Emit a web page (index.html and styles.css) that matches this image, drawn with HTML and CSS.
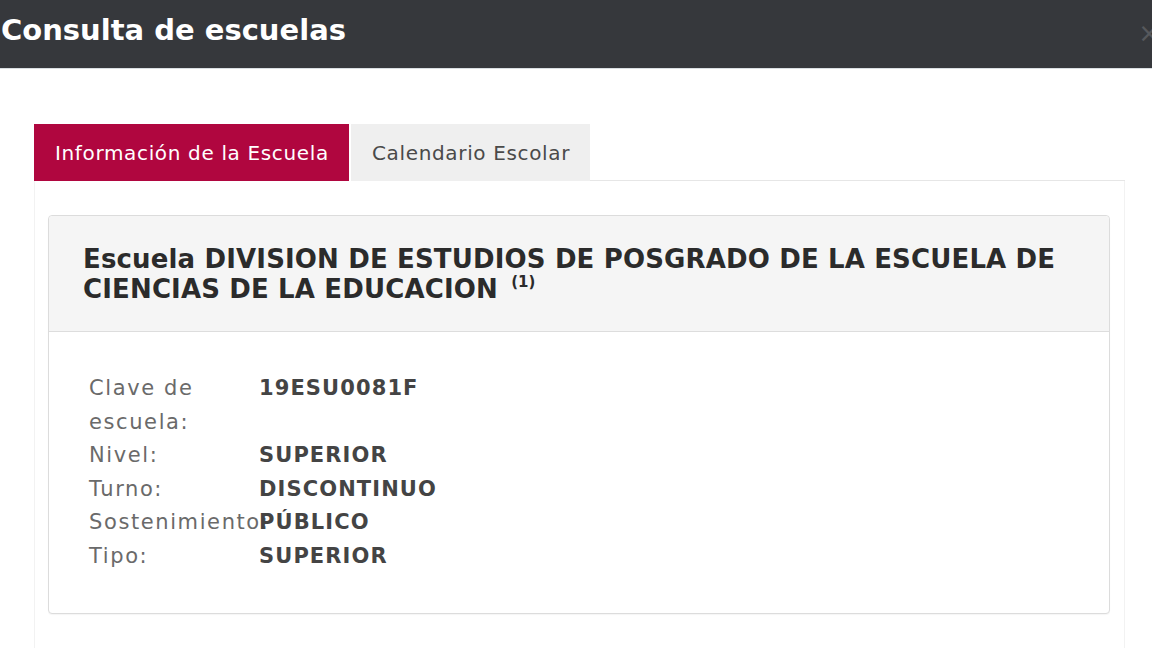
FILE: index.html
```html
<!DOCTYPE html>
<html lang="es">
<head>
<meta charset="utf-8">
<title>Consulta de escuelas</title>
<link rel="stylesheet" href="styles.css">
</head>
<body>
<header class="modal-header">
  <h1 class="modal-title">Consulta de escuelas</h1>
  <span class="close">×</span>
</header>
<main class="modal-body">
  <nav class="tabs">
    <div class="tab active">Información de la Escuela</div>
    <div class="tab">Calendario Escolar</div>
    <div class="tab-fill"></div>
  </nav>
  <section class="tab-content">
    <div class="panel">
      <div class="panel-heading">
        <h2 class="panel-title">Escuela DIVISION DE ESTUDIOS DE POSGRADO DE LA ESCUELA DE CIENCIAS DE LA EDUCACION <sup>(1)</sup></h2>
      </div>
      <div class="panel-body">
        <dl class="info">
          <dt>Clave de escuela:</dt><dd>19ESU0081F</dd>
          <dt>Nivel:</dt><dd>SUPERIOR</dd>
          <dt>Turno:</dt><dd>DISCONTINUO</dd>
          <dt class="nowrap">Sostenimiento:</dt><dd class="over">PÚBLICO</dd>
          <dt>Tipo:</dt><dd>SUPERIOR</dd>
        </dl>
      </div>
    </div>
  </section>
</main>
</body>
</html>
```

FILE: styles.css
```css
* { box-sizing: border-box; }
html, body { margin: 0; padding: 0; background: #fff; }
body {
  font-family: "DejaVu Sans", "Open Sans", sans-serif;
  color: #333;
  overflow: hidden;
  height: 648px;
}
.modal-header {
  height: 69px;
  background: #36383c;
  border-bottom: 1px solid #d9dee2;
  display: flex;
  align-items: center;
  justify-content: space-between;
  padding: 0 0 9px 1px;
}
.modal-title {
  margin: 0;
  color: #fff;
  font-size: 29px;
  font-weight: bold;
  letter-spacing: 0;
}
.close {
  color: #56585c;
  font-size: 26px;
  margin-right: -8px;
  margin-top: 6px;
}
.modal-body {
  padding: 55px 27px 0 34px;
}
.tabs {
  display: flex;
  height: 57px;
}
.tab {
  display: flex;
  align-items: center;
  padding: 0 20px 0 21px;
  font-size: 20px;
  letter-spacing: 0.65px;
  color: #4a4a4a;
  background: #efefef;
}
.tab.active {
  background: #b0063f;
  color: #fff;
  margin-right: 2px;
  width: 315px;
}
.tab-fill {
  flex: 1;
  border-bottom: 1px solid #e6e6e6;
}
.tab-content {
  border-left: 1px solid #f2f2f2;
  border-right: 1px solid #f2f2f2;
  padding: 34px 14px 0 13px;
  height: 467px;
}
.panel {
  border: 1px solid #dcdcdc;
  border-radius: 4px;
  background: #fff;
  box-shadow: 0 1px 1px rgba(0,0,0,0.04);
}
.panel-heading {
  background: #f5f5f5;
  border-bottom: 1px solid #dddddd;
  border-radius: 4px 4px 0 0;
  padding: 28px 20px 27px 34px;
}
.panel-title {
  margin: 0;
  font-size: 26px;
  line-height: 30px;
  letter-spacing: 0.15px;
  font-weight: bold;
  color: #2b2b2b;
}
.panel-title sup {
  font-size: 15px;
  vertical-align: top;
  position: relative;
  top: 1px;
  line-height: 1;
  margin-left: 4px;
  letter-spacing: 0;
}
.panel-body {
  padding: 40px 40px 40px 40px;
}
.info {
  display: grid;
  grid-template-columns: 170px 1fr;
  margin: 0;
  font-size: 21px;
  line-height: 33.5px;
}
.info dt {
  color: #6a6a6a;
  width: 140px;
  letter-spacing: 1.6px;
}
.info dt.nowrap { white-space: nowrap; }
.info dd {
  margin: 0;
  font-weight: bold;
  color: #444;
  letter-spacing: 1.1px;
}
.info dd.over {
  position: relative;
  background: transparent;
}
```
